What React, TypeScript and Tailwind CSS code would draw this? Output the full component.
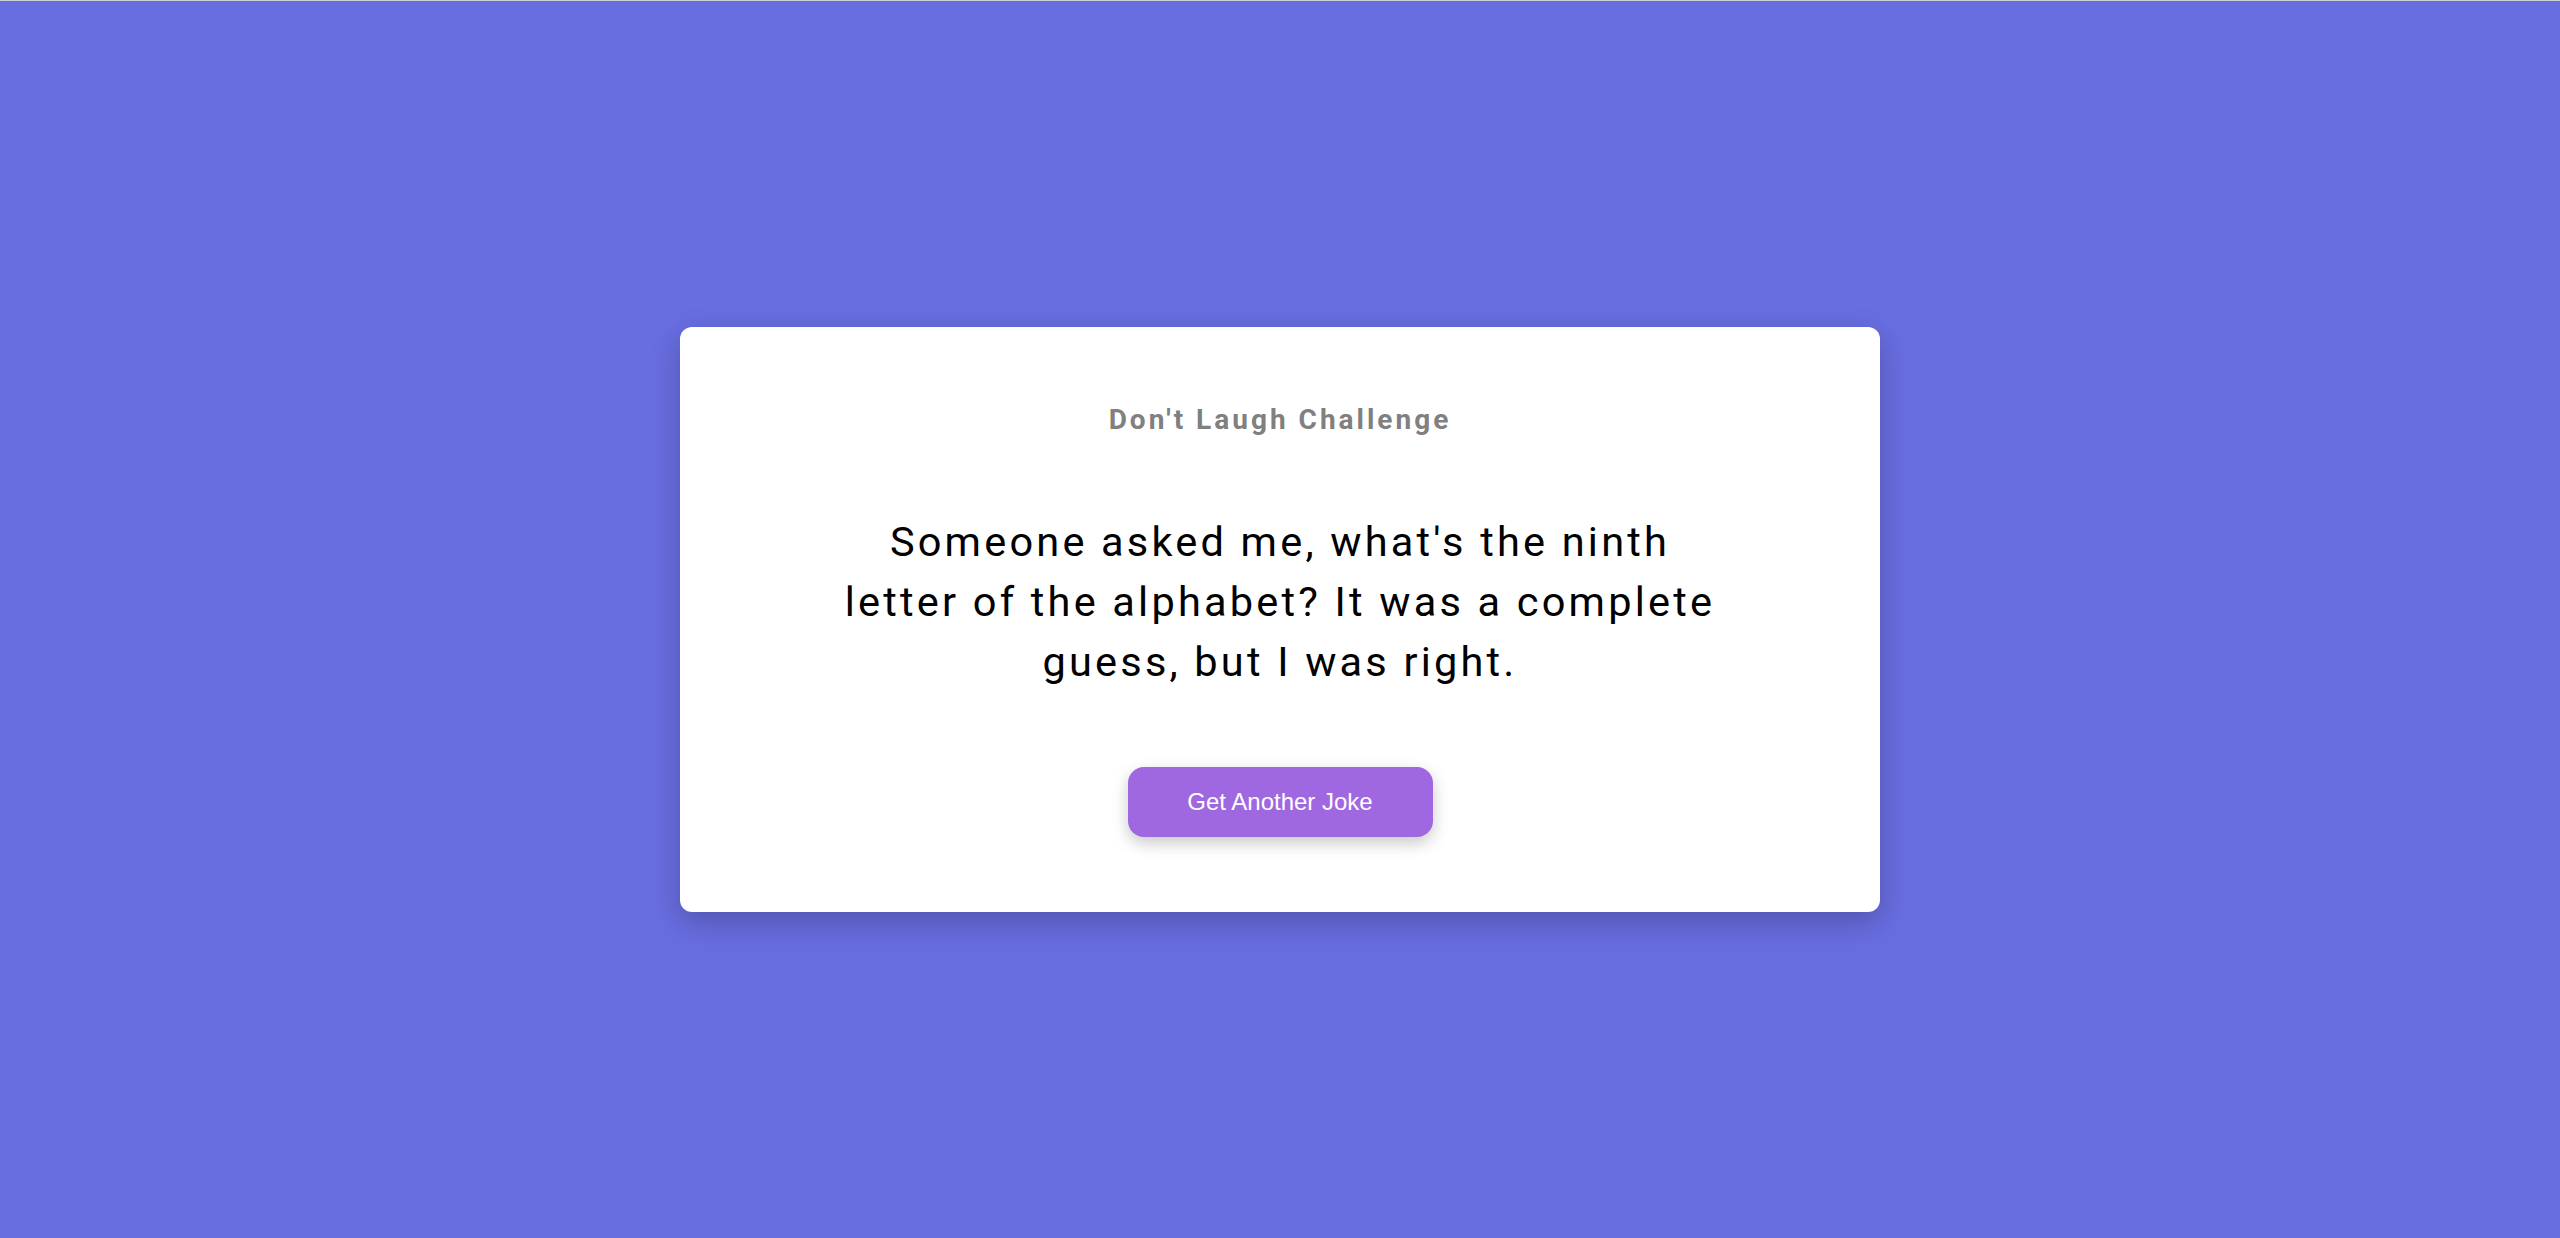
export default function App() {
  return (
    <div className="min-h-screen w-full bg-[#686de0] border-t border-[#cfcfd6] flex items-center justify-center font-['Roboto',sans-serif]">
      {/* Card */}
      <div className="w-[1200px] bg-white rounded-[12px] shadow-[0_10px_30px_rgba(0,0,0,0.22)] flex flex-col items-center pt-[72px] pb-[75px]">
        <h1 className="text-[28px] leading-[42px] font-bold tracking-[3px] text-[#808080]">
          Don't Laugh Challenge
        </h1>
        <p className="mt-[71px] max-w-[880px] text-center text-[41.5px] leading-[60px] tracking-[3.2px] text-black">
          Someone asked me, what's the ninth letter of the alphabet? It was a complete guess, but I was right.
        </p>
        <button className="mt-[75px] w-[305px] h-[70px] rounded-[16px] bg-[#9f68e0] text-white text-[24px] font-['Liberation_Sans',Arial,sans-serif] shadow-[0_6px_16px_rgba(0,0,0,0.22)]">
          Get Another Joke
        </button>
      </div>
    </div>
  )
}
